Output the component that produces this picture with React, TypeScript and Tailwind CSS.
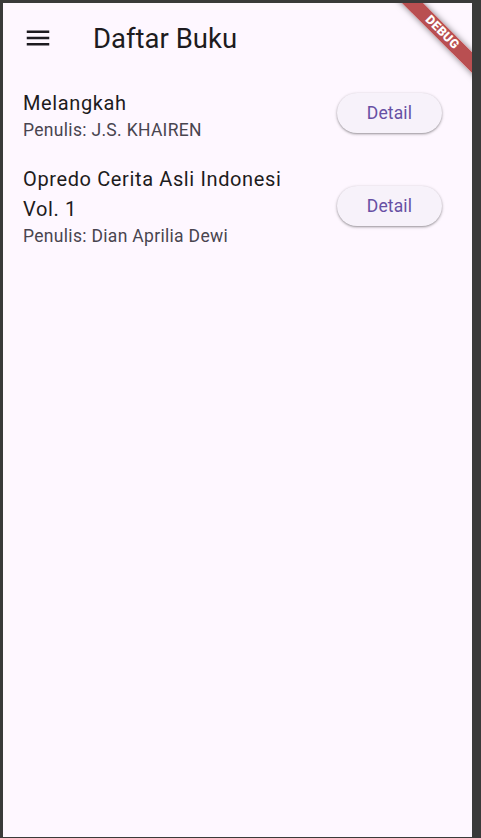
const books = [
  { title: "Melangkah", author: "J.S. KHAIREN" },
  { title: "Opredo Cerita Asli Indonesi Vol. 1", author: "Dian Aprilia Dewi" },
];

function MenuIcon() {
  return (
    <svg width="30" height="30" viewBox="0 0 24 24" fill="#1d1b20">
      <path d="M3 18h18v-2H3v2zm0-5h18v-2H3v2zm0-7v2h18V6H3z" />
    </svg>
  );
}

function DetailButton() {
  return (
    <button className="h-[40px] w-[105px] shrink-0 rounded-full bg-[#f7f2fa] text-[17.5px] font-normal tracking-[0.125px] text-[#6750a4] shadow-[0_1px_2px_rgba(0,0,0,0.3),0_1px_3px_1px_rgba(0,0,0,0.1)]">
      Detail
    </button>
  );
}

export default function App() {
  return (
    <div className="flex h-[838px] w-[481px] bg-[#3a3a3a] pb-[1px] pl-[3px] pr-[9px] pt-[3px] font-['Roboto',sans-serif]">
      <div className="relative flex-1 overflow-hidden bg-[#fef7ff]">
        <header className="flex h-[70px] items-center">
          <div className="flex w-[70px] items-center justify-center">
            <MenuIcon />
          </div>
          <h1 className="ml-[20px] text-[27.5px] leading-[35px] text-[#1d1b20]">Daftar Buku</h1>
        </header>

        <ul>
          {books.map((b, i) => (
            <li
              key={b.title}
              className={
                i === 0
                  ? "flex h-[80px] items-center gap-[20px] pl-[20px] pr-[30px]"
                  : "flex items-center gap-[20px] py-[10.5px] pl-[20px] pr-[30px]"
              }
            >
              <div className={i === 0 ? "mt-[5px] flex-1" : "flex-1"}>
                <p className="text-[20px] leading-[30px] tracking-[0.625px] text-[#1d1b20]">{b.title}</p>
                <p className="text-[17.5px] leading-[25px] tracking-[0.3125px] text-[#49454f]">
                  Penulis: {b.author}
                </p>
              </div>
              <DetailButton />
            </li>
          ))}
        </ul>

        {/* debug ribbon */}
        <div className="absolute right-[-30px] top-[22px] flex h-[15px] w-[120px] rotate-45 items-center justify-center bg-[#a82426]/80 shadow-[0_0_6px_rgba(0,0,0,0.5)]">
          <span className="text-[12.5px] font-black leading-none tracking-[0.3px] text-white">DEBUG</span>
        </div>
      </div>
    </div>
  );
}
